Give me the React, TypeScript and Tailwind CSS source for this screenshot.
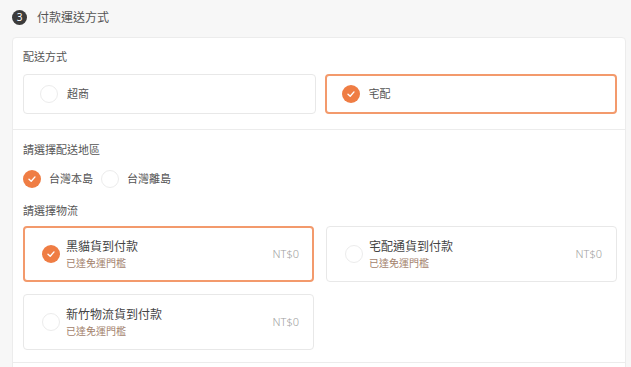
const font = { fontFamily: '"Noto Sans", "Noto Sans CJK TC", sans-serif' };

function Radio({ checked, size = 18 }: { checked: boolean; size?: number }) {
  if (checked) {
    return (
      <span
        className="flex shrink-0 items-center justify-center rounded-full bg-[#ef7d44]"
        style={{ width: size, height: size }}
      >
        <svg width="10" height="10" viewBox="0 0 10 10" fill="none">
          <path d="M2 5.2 L4.2 7.2 L8 2.9" stroke="white" strokeWidth="1.4" strokeLinecap="round" strokeLinejoin="round" />
        </svg>
      </span>
    );
  }
  return (
    <span
      className="shrink-0 rounded-full border border-[#ececec] bg-white"
      style={{ width: size, height: size }}
    />
  );
}

function OptionBox({ label, checked }: { label: string; checked: boolean }) {
  return (
    <div
      className={`flex h-[40px] items-center gap-[9px] rounded-[4px] bg-white ${
        checked ? "border-2 border-[#f39a6c] pl-[15px]" : "border border-[#e8e8e8] pl-[16px]"
      }`}
    >
      <Radio checked={checked} />
      <span className="text-[11px] text-[#555]">{label}</span>
    </div>
  );
}

function ShipCard({ title, checked }: { title: string; checked: boolean }) {
  return (
    <div
      className={`flex h-[56px] items-center rounded-[4px] bg-white ${
        checked ? "border-2 border-[#f39a6c] pl-[17px] pr-[13px]" : "border border-[#e8e8e8] pl-[18px] pr-[14px]"
      }`}
    >
      <Radio checked={checked} size={18} />
      <div className="ml-[6px] flex flex-1 flex-col">
        <span className="text-[12px] leading-[17px] text-[#444]">{title}</span>
        <span className="text-[10px] leading-[16px] text-[#a3826c]">已達免運門檻</span>
      </div>
      <span className="text-[11px] font-light text-[#a0a0a0]">NT$0</span>
    </div>
  );
}

export default function App() {
  return (
    <div className="h-[367px] w-[631px] overflow-hidden bg-[#f7f7f7] pl-[12px] pr-[5px]" style={font}>
      <div className="flex h-[37px] items-center gap-[10px] pb-[2px]">
        <span className="flex h-[15px] w-[15px] items-center justify-center rounded-full bg-[#3b3b3b] text-[10px] text-white">
          3
        </span>
        <span className="text-[12px] text-[#555]">付款運送方式</span>
      </div>

      <div className="rounded-t-[4px] border border-[#ececec] bg-white">
        <div className="pl-[10px] pr-[8px] pt-[10px] pb-[15px]">
          <div className="mb-[8px] text-[11px] leading-[18px] text-[#555]">配送方式</div>
          <div className="grid grid-cols-2 gap-[9px]">
            <OptionBox label="超商" checked={false} />
            <OptionBox label="宅配" checked />
          </div>
        </div>

        <div className="border-t border-[#ececec] pl-[10px] pr-[8px] pt-[11px] pb-[12px]">
          <div className="text-[11px] leading-[18px] text-[#555]">請選擇配送地區</div>
          <div className="mt-[11px] flex items-center">
            <Radio checked />
            <span className="ml-[8px] mr-[8px] text-[11px] text-[#555]">台灣本島</span>
            <Radio checked={false} />
            <span className="ml-[8px] text-[11px] text-[#555]">台灣離島</span>
          </div>
          <div className="mt-[14px] text-[11px] leading-[18px] text-[#555]">請選擇物流</div>
          <div className="mt-[6px] grid grid-cols-2 gap-x-[12px] gap-y-[12px]">
            <ShipCard title="黑貓貨到付款" checked />
            <ShipCard title="宅配通貨到付款" checked={false} />
            <ShipCard title="新竹物流貨到付款" checked={false} />
          </div>
        </div>

        <div className="h-[20px] border-t border-[#ececec]" />
      </div>
    </div>
  );
}
